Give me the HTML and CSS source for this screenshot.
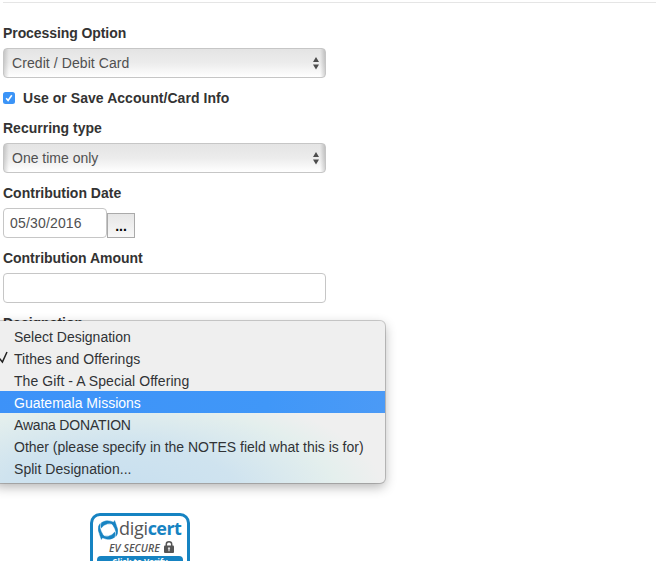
FILE: index.html
```html
<!DOCTYPE html>
<html lang="en">
<head>
<meta charset="utf-8">
<title>Contribution</title>
<link rel="stylesheet" href="styles.css">
</head>
<body>
<main class="page">
  <form class="form">
    <div class="field">
      <span class="label"><span class="t-proc">Processing Option</span></span>
      <div class="select"><span class="t-credit">Credit / Debit Card</span>
        <svg class="arrows" width="6" height="12" viewBox="0 0 6 12"><path d="M3 0L6 5H0zM0 7.4H6L3 12.4z"/></svg></div>
    </div>
    <div class="check-row">
      <svg class="checkbox" width="12" height="12" viewBox="0 0 12 12"><rect width="12" height="12" rx="2.5"/><path d="M3.2 6.3L5.1 8.5L8.8 3.2"/></svg>
      <span class="label"><span class="t-use">Use or Save Account/Card Info</span></span>
    </div>
    <div class="field">
      <span class="label"><span class="t-recur">Recurring type</span></span>
      <div class="select"><span class="t-once">One time only</span>
        <svg class="arrows" width="6" height="12" viewBox="0 0 6 12"><path d="M3 0L6 5H0zM0 7.4H6L3 12.4z"/></svg></div>
    </div>
    <div class="field">
      <span class="label"><span class="t-date">Contribution Date</span></span>
      <div class="date-row">
        <div class="input date"><span class="t-day">05/30/2016</span></div>
        <div class="picker">...</div>
      </div>
    </div>
    <div class="field">
      <span class="label"><span class="t-amount">Contribution Amount</span></span>
      <div class="input"></div>
    </div>
    <div class="field designation">
      <span class="label"><span class="t-desig">Designation</span></span>
      <div class="menu">
        <div class="item"><span class="t-m1">Select Designation</span></div>
        <div class="item"><svg class="tick" width="9" height="13" viewBox="0 0 9 13"><path d="M0.5 7.5L3.4 11L8 1"/></svg><span class="t-m2">Tithes and Offerings</span></div>
        <div class="item"><span class="t-m3">The Gift - A Special Offering</span></div>
        <div class="item active"><span class="t-m4">Guatemala Missions</span></div>
        <div class="item"><span class="t-m5">Awana DONATION</span></div>
        <div class="item"><span class="t-m6">Other (please specify in the NOTES field what this is for)</span></div>
        <div class="item"><span class="t-m7">Split Designation...</span></div>
      </div>
    </div>
  </form>
  <div class="seal">
    <div class="brand">
      <svg width="20" height="20" viewBox="0 0 20 20"><g fill="#1683c2" stroke="#1683c2" stroke-width=".5"><path d="M2.2 3.6Q1.2 8 3.2 11.5Q4.6 14.8 7.2 17.6L4.6 17.8Q0.2 13.5 0.2 9Q.2 5.6 2.2 3.6z"/><path d="M3.6 2.6Q8 -.4 12.5 1.2L15.6 2.4L16.6 .6L18.4 5.6Q13.5 3 9.5 3.8Q5.6 4.6 3.2 8Q2.6 5 3.6 2.6z"/><path d="M17.8 16.4Q18.8 12 16.8 8.5Q15.4 5.2 12.8 2.4L15.4 2.2Q19.8 6.5 19.8 11Q19.8 14.4 17.8 16.4z"/><path d="M16.4 17.4Q12 20.4 7.5 18.8L4.4 17.6L3.4 19.4L1.6 14.4Q6.5 17 10.5 16.2Q14.4 15.4 16.8 12Q17.4 15 16.4 17.4z"/></g></svg>
      <span class="word">digi<b>cert</b></span>
    </div>
    <div class="secure"><span class="t-ev">EV SECURE</span>
      <svg width="10" height="12" viewBox="0 0 10 12"><path d="M2.3 5V3.2a2.7 2.4 0 0 1 5.4 0V5" fill="none" stroke="#555" stroke-width="1.5"/><rect y="4.5" width="10" height="7.5" rx="1" fill="#555"/><path d="M5 6.2a1.2 1.2 0 0 1 .6 2.2V10.2H4.4V8.4A1.2 1.2 0 0 1 5 6.2" fill="#ddd"/></svg></div>
    <div class="verify">Click to Verify</div>
  </div>
</main>
</body>
</html>
```
FILE: styles.css
```css
* { box-sizing: border-box; }
body {
  margin: 0;
  background: #fff;
  color: #333;
  font: 14px/20px "Liberation Sans", Arial, sans-serif;
}
.page {
  height: 561px;
  overflow: hidden;
  padding: 2px 0 0 3px;
}
.form {
  border-top: 1px solid #e5e5e5;
  padding-top: 20px;
  height: 511px;
}
.label { display: block; height: 20px; font-weight: bold; white-space: nowrap; }
.field { margin-bottom: 10px; }
.select, .input {
  width: 323px;
  height: 30px;
  margin-top: 5px;
  border: 1px solid #c6c6c6;
  border-radius: 4px;
  display: flex;
  align-items: center;
  color: #505050;
  white-space: nowrap;
}
.select {
  justify-content: space-between;
  padding: 0 6px 0 8px;
  background: linear-gradient(90deg, rgba(0,0,0,.14), transparent 5px, transparent 316px, rgba(0,0,0,.16)), linear-gradient(#e4e4e4, #ececec 50%, #fff);
}
.arrows { fill: #4d4d4d; overflow: visible; }
.check-row { display: flex; align-items: center; gap: 8px; height: 20px; margin-bottom: 10px; }
.checkbox rect { fill: #3b94f7; }
.checkbox path { fill: none; stroke: #fff; stroke-width: 1.6; }
.date-row { display: flex; align-items: flex-end; height: 35px; }
.date { width: 104px; padding-left: 6px; }
.picker {
  width: 28px;
  height: 25px;
  border: 1px solid #aaa;
  background: linear-gradient(#e6e6e6, #f8f8f8);
  text-align: center;
  font-weight: bold;
  line-height: 24px;
  color: #000;
}
.t-proc { letter-spacing: -.08px; }
.t-credit { letter-spacing: .08px; }
.t-use { letter-spacing: .05px; }
.t-day { letter-spacing: .17px; }
.t-amount { letter-spacing: -.03px; }
.t-m2 { letter-spacing: .05px; }
.t-m3 { letter-spacing: .07px; }
.t-m5 { letter-spacing: -.18px; }
.t-m6 { letter-spacing: -.01px; }
.t-m7 { letter-spacing: .04px; }
.designation { position: relative; }
.menu {
  position: absolute;
  left: -9px;
  top: 8px;
  width: 391px;
  height: 162px;
  padding: 4px 0;
  border-radius: 5px;
  color: #303336;
  background: radial-gradient(ellipse 265px 108px at 125px 172px, #c7dfef, #cfe3ef 45%, #e4efed 82%, rgba(239,239,239,0)), #efefef;
  box-shadow: 0 0 0 1px rgba(0,0,0,.18), 0 4px 12px rgba(0,0,0,.3);
}
.item { display: flex; align-items: center; position: relative; height: 22px; padding: 2px 0 0 20px; white-space: nowrap; }
.active { background: linear-gradient(90deg, #3d92f8, #4097f8 70%, #4b9af6); color: #fff; }
.tick { position: absolute; left: 5px; top: 4px; fill: none; stroke: #222; stroke-width: 1.5; }
.seal {
  width: 100px;
  height: 66px;
  margin-left: 87px;
  border: 3px solid #1683c2;
  border-radius: 10px;
  padding-top: 3px;
}
.brand { display: flex; align-items: center; height: 22px; padding-left: 5px; gap: 1px; }
.word { font: 18px/22px "Open Sans", sans-serif; color: #555; letter-spacing: -.3px; margin-top: -4px; }
.word b { font-weight: 700; color: #1683c2; letter-spacing: -.6px; }
.secure { display: flex; align-items: center; height: 14px; gap: 4px; padding-left: 16px; font: italic 600 10.5px/14px "Open Sans", sans-serif; color: #555; white-space: nowrap; }
.secure svg { margin-top: -3px; }
.t-ev { margin-top: -1px; letter-spacing: .05px; }
.verify { height: 22px; margin: 1px 4px 0; border-radius: 4px 4px 0 0; background: #1683c2; color: #fff; text-align: center; font: bold 8px/11px "Open Sans", sans-serif; }
```
